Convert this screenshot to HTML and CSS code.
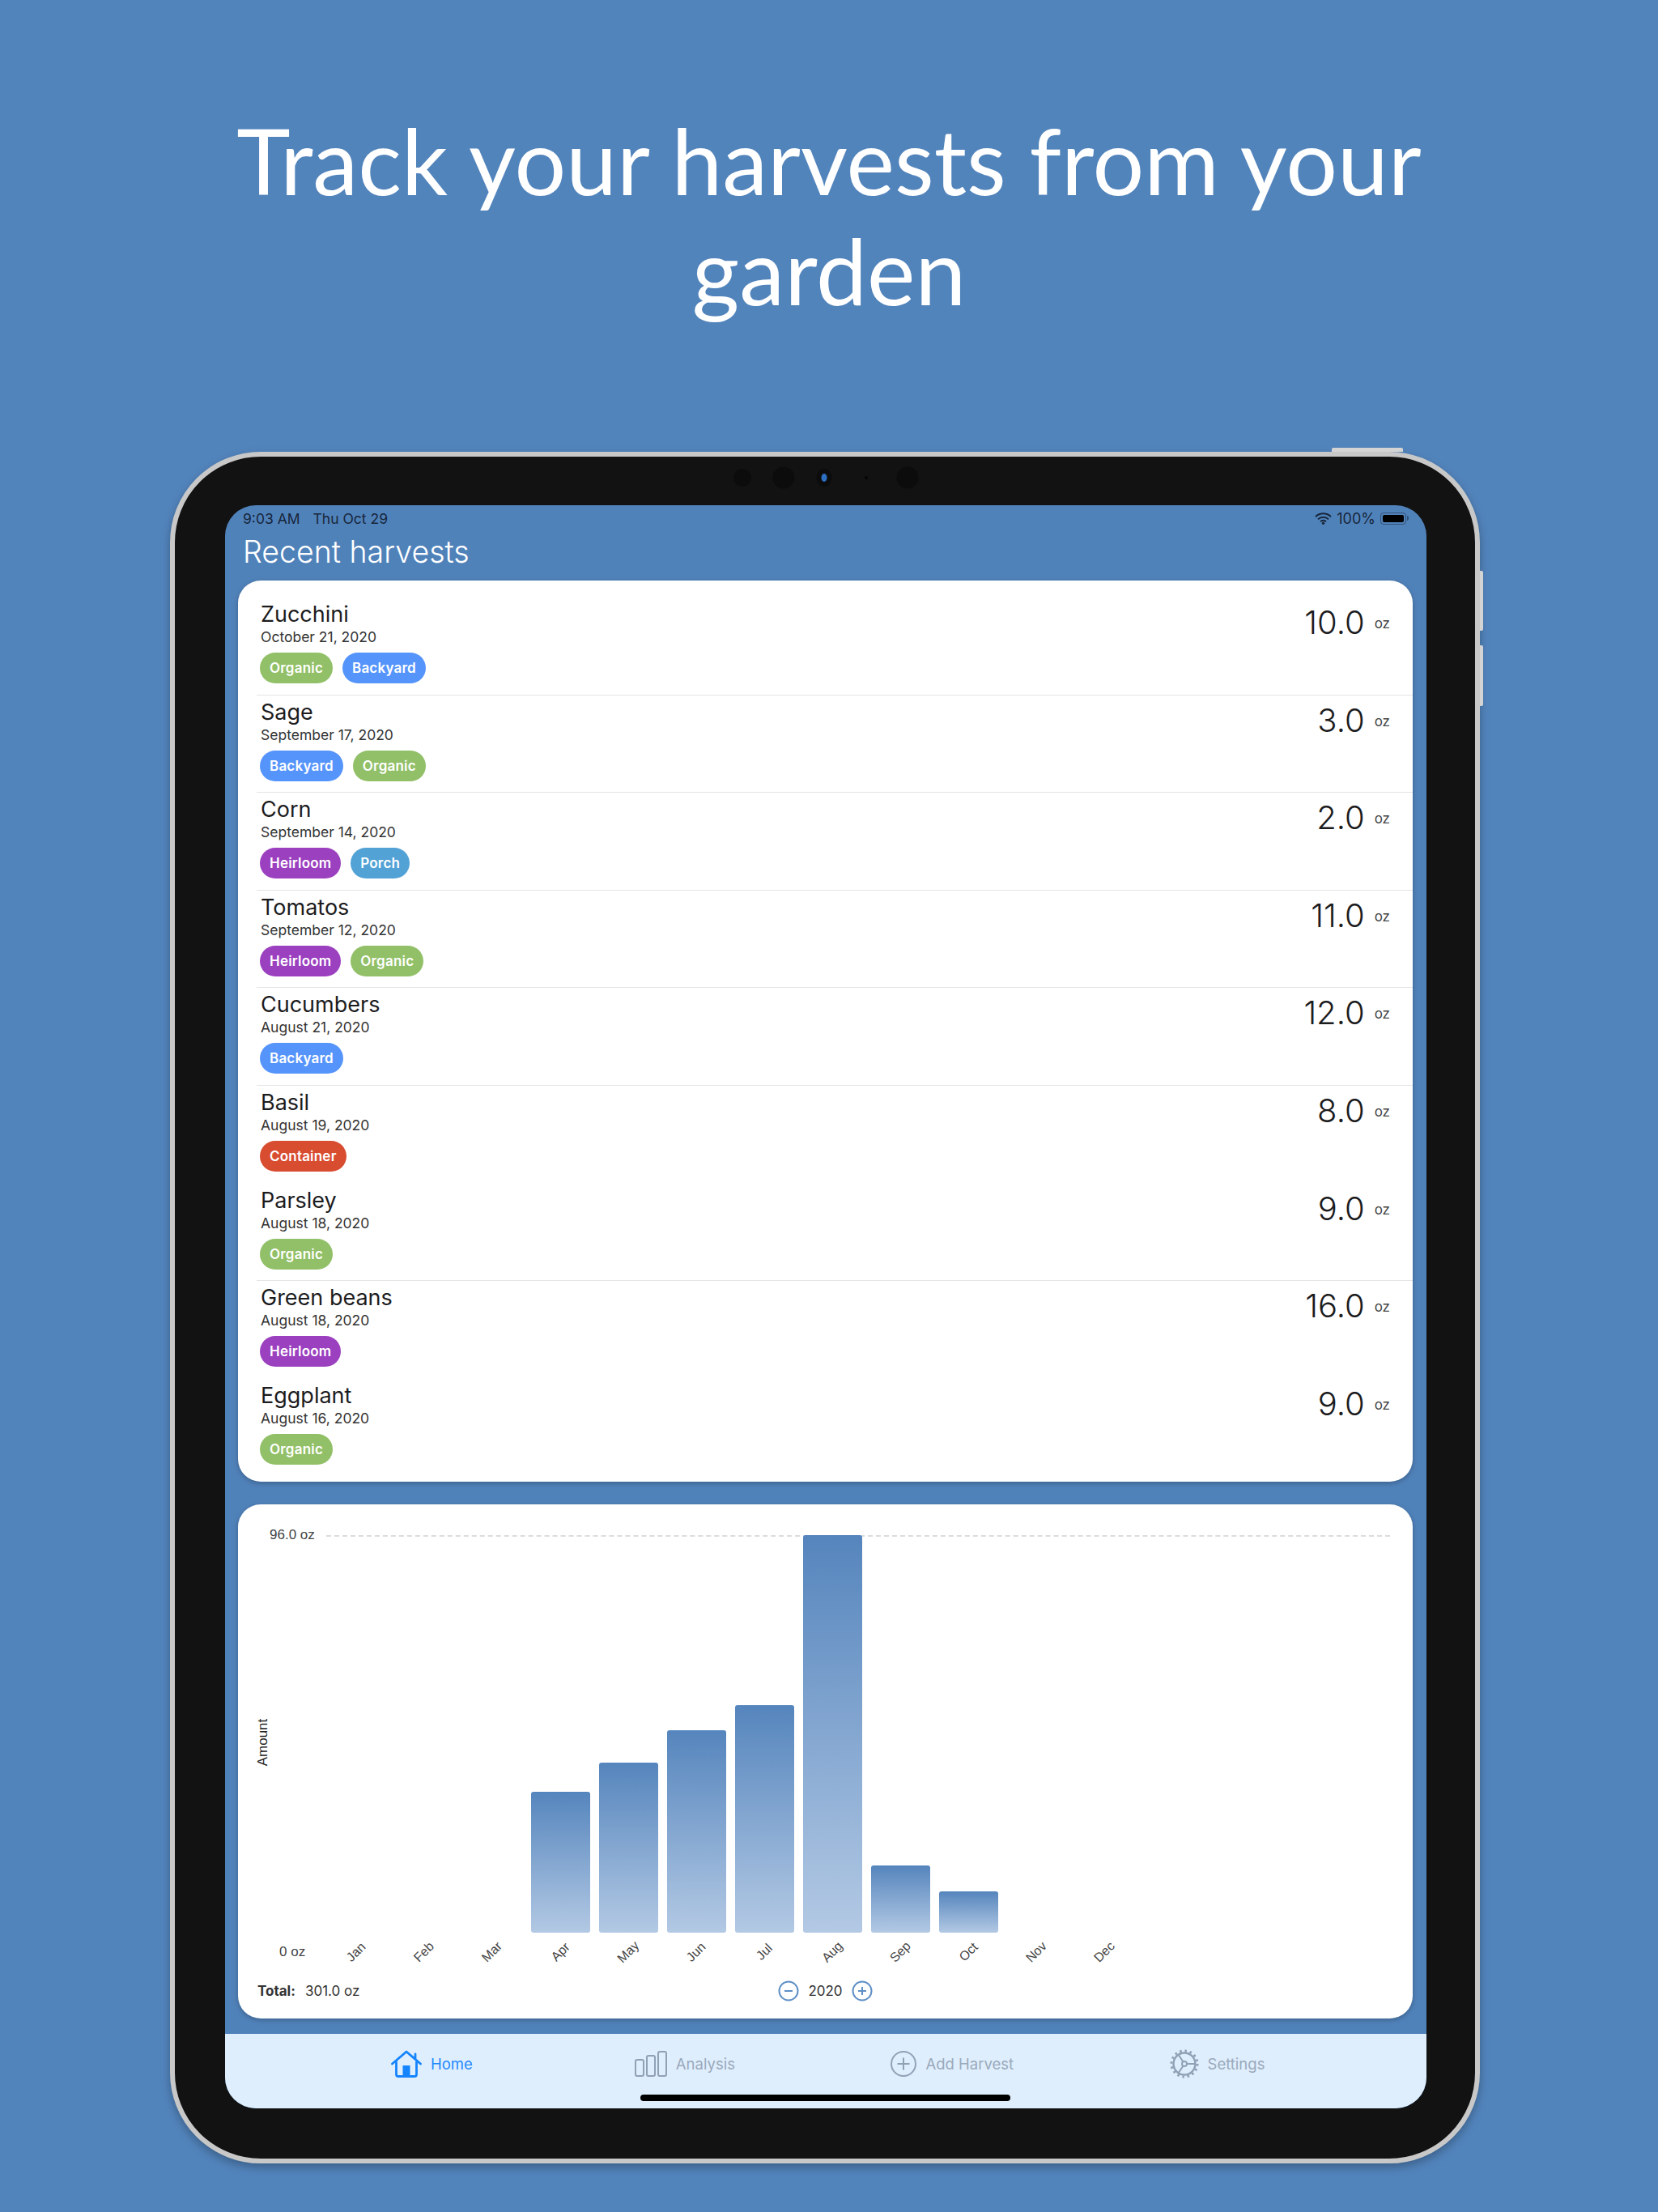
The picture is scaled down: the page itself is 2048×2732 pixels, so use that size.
FILE: index.html
```html
<!DOCTYPE html>
<html lang="en">
<head>
    <meta charset="UTF-8">
    <meta name="viewport" content="width=device-width, initial-scale=1.0">
    <title>Track your harvests</title>
    <link rel="stylesheet" href="styles.css">
</head>
<body>
    <h1 class="headline">Track your harvests from your<br>garden</h1>

    <div class="device">
        <span class="hw-btn hw-top"></span>
        <span class="hw-btn hw-vol-up"></span>
        <span class="hw-btn hw-vol-down"></span>

        <div class="sensors">
            <span class="sensor sensor-sm"></span>
            <span class="sensor sensor-lg"></span>
            <span class="sensor sensor-cam"></span>
            <span class="sensor sensor-dot"></span>
            <span class="sensor sensor-lg"></span>
        </div>

        <div class="screen">
            <div class="status-bar">
                <div class="status-left"><span>9:03 AM</span><span>Thu Oct 29</span></div>
                <div class="status-right">
                    <svg width="21" height="15" viewBox="0 0 21 15" class="wifi">
                        <path d="M1 5.2a13.5 13.5 0 0 1 19 0M4 8.4a9.2 9.2 0 0 1 13 0M7 11.2a4.8 4.8 0 0 1 7 0" fill="none" stroke="#17263a" stroke-width="2"/>
                        <circle cx="10.5" cy="13.2" r="1.7" fill="#17263a"/>
                    </svg>
                    <span>100%</span>
                    <span class="battery"><span class="battery-fill"></span></span>
                </div>
            </div>

            <h2 class="page-title">Recent harvests</h2>

            <div class="card harvest-list">
                <div class="row">
                    <div>
                        <div class="crop">Zucchini</div>
                        <div class="date">October 21, 2020</div>
                        <div class="tags"><span class="tag organic">Organic</span><span class="tag backyard">Backyard</span></div>
                    </div>
                    <div class="amount"><span class="value">10.0</span><span class="unit">oz</span></div>
                </div>
                <div class="row sep">
                    <div>
                        <div class="crop">Sage</div>
                        <div class="date">September 17, 2020</div>
                        <div class="tags"><span class="tag backyard">Backyard</span><span class="tag organic">Organic</span></div>
                    </div>
                    <div class="amount"><span class="value">3.0</span><span class="unit">oz</span></div>
                </div>
                <div class="row sep">
                    <div>
                        <div class="crop">Corn</div>
                        <div class="date">September 14, 2020</div>
                        <div class="tags"><span class="tag heirloom">Heirloom</span><span class="tag porch">Porch</span></div>
                    </div>
                    <div class="amount"><span class="value">2.0</span><span class="unit">oz</span></div>
                </div>
                <div class="row sep">
                    <div>
                        <div class="crop">Tomatos</div>
                        <div class="date">September 12, 2020</div>
                        <div class="tags"><span class="tag heirloom">Heirloom</span><span class="tag organic">Organic</span></div>
                    </div>
                    <div class="amount"><span class="value">11.0</span><span class="unit">oz</span></div>
                </div>
                <div class="row sep">
                    <div>
                        <div class="crop">Cucumbers</div>
                        <div class="date">August 21, 2020</div>
                        <div class="tags"><span class="tag backyard">Backyard</span></div>
                    </div>
                    <div class="amount"><span class="value">12.0</span><span class="unit">oz</span></div>
                </div>
                <div class="row sep">
                    <div>
                        <div class="crop">Basil</div>
                        <div class="date">August 19, 2020</div>
                        <div class="tags"><span class="tag container">Container</span></div>
                    </div>
                    <div class="amount"><span class="value">8.0</span><span class="unit">oz</span></div>
                </div>
                <div class="row">
                    <div>
                        <div class="crop">Parsley</div>
                        <div class="date">August 18, 2020</div>
                        <div class="tags"><span class="tag organic">Organic</span></div>
                    </div>
                    <div class="amount"><span class="value">9.0</span><span class="unit">oz</span></div>
                </div>
                <div class="row sep">
                    <div>
                        <div class="crop">Green beans</div>
                        <div class="date">August 18, 2020</div>
                        <div class="tags"><span class="tag heirloom">Heirloom</span></div>
                    </div>
                    <div class="amount"><span class="value">16.0</span><span class="unit">oz</span></div>
                </div>
                <div class="row">
                    <div>
                        <div class="crop">Eggplant</div>
                        <div class="date">August 16, 2020</div>
                        <div class="tags"><span class="tag organic">Organic</span></div>
                    </div>
                    <div class="amount"><span class="value">9.0</span><span class="unit">oz</span></div>
                </div>
            </div>

            <div class="card chart-card">
                <div class="plot">
                    <span class="max-label">96.0 oz</span>
                    <span class="max-line"></span>
                    <span class="axis-title">Amount</span>
                    <div class="bars">
                        <div class="slot"></div>
                        <div class="slot"></div>
                        <div class="slot"></div>
                        <div class="slot"><div class="bar" style="height:174px"></div></div>
                        <div class="slot"><div class="bar" style="height:210px"></div></div>
                        <div class="slot"><div class="bar" style="height:250px"></div></div>
                        <div class="slot"><div class="bar" style="height:281px"></div></div>
                        <div class="slot"><div class="bar" style="height:491px"></div></div>
                        <div class="slot"><div class="bar" style="height:83px"></div></div>
                        <div class="slot"><div class="bar" style="height:51px"></div></div>
                        <div class="slot"></div>
                        <div class="slot"></div>
                    </div>
                </div>
                <div class="months">
                    <span class="zero-label">0 oz</span>
                    <span class="month"><i>Jan</i></span>
                    <span class="month"><i>Feb</i></span>
                    <span class="month"><i>Mar</i></span>
                    <span class="month"><i>Apr</i></span>
                    <span class="month"><i>May</i></span>
                    <span class="month"><i>Jun</i></span>
                    <span class="month"><i>Jul</i></span>
                    <span class="month"><i>Aug</i></span>
                    <span class="month"><i>Sep</i></span>
                    <span class="month"><i>Oct</i></span>
                    <span class="month"><i>Nov</i></span>
                    <span class="month"><i>Dec</i></span>
                </div>
                <div class="chart-footer">
                    <div class="total"><b>Total:</b><span>301.0 oz</span></div>
                    <div class="stepper">
                        <svg width="26" height="26" viewBox="0 0 26 26"><circle cx="13" cy="13" r="11.5" fill="none" stroke="#5f8fc6" stroke-width="2"/><path d="M8 13h10" stroke="#5f8fc6" stroke-width="2"/></svg>
                        <span>2020</span>
                        <svg width="26" height="26" viewBox="0 0 26 26"><circle cx="13" cy="13" r="11.5" fill="none" stroke="#5f8fc6" stroke-width="2"/><path d="M8 13h10M13 8v10" stroke="#5f8fc6" stroke-width="2"/></svg>
                    </div>
                </div>
            </div>

            <div class="tab-bar">
                <div class="tab active">
                    <svg width="38" height="34" viewBox="0 0 38 34">
                        <path d="M1.5 17 19 2 36.500 17M30 11.500V5" fill="none" stroke="#1584ff" stroke-width="2.800" stroke-linecap="round" stroke-linejoin="round"/>
                        <path d="M6.500 14v16a2.500 2.500 0 0 0 2.500 2.500h20a2.500 2.500 0 0 0 2.500-2.500V14" fill="none" stroke="#1584ff" stroke-width="2.800"/>
                        <rect x="14.500" y="19" width="9" height="13" fill="#1584ff"/>
                    </svg>
                    <span>Home</span>
                </div>
                <div class="tab">
                    <svg width="40" height="32" viewBox="0 0 40 32" fill="none" stroke="#8fa1b5" stroke-width="2">
                        <rect x="1" y="11" width="10" height="20" rx="2"/>
                        <rect x="15" y="6" width="10" height="25" rx="2"/>
                        <rect x="29" y="1" width="10" height="30" rx="2"/>
                    </svg>
                    <span>Analysis</span>
                </div>
                <div class="tab">
                    <svg width="32" height="32" viewBox="0 0 32 32" fill="none" stroke="#8fa1b5" stroke-width="2">
                        <circle cx="16" cy="16" r="15"/>
                        <path d="M16 8.500v15M8.500 16h15"/>
                    </svg>
                    <span>Add Harvest</span>
                </div>
                <div class="tab">
                    <svg width="36" height="36" viewBox="0 0 36 36" fill="none" stroke="#8fa1b5">
                        <circle cx="18" cy="18" r="13.500" stroke-width="2.400"/>
                        <circle cx="18" cy="18" r="16" stroke-width="3" stroke-dasharray="2.500 3.780"/>
                        <path d="M21 18h11M16.500 15.500 10.500 6.500M16.500 20.500 10.500 29.500" stroke-width="2"/>
                        <circle cx="18" cy="18" r="3" stroke-width="2"/>
                    </svg>
                    <span>Settings</span>
                </div>
                <span class="home-indicator"></span>
            </div>
        </div>
    </div>
</body>
</html>
```
FILE: styles.css
```css
body {
    margin: 0;
    width: 2048px;
    height: 2732px;
    overflow: hidden;
    background-color: #5284bc;
    font-family: Inter, "Liberation Sans", sans-serif;
    color: #1c1c1e;
}

.headline {
    margin: 0;
    height: 558px;
    box-sizing: border-box;
    padding-top: 130px;
    text-align: center;
    font-family: Lato, sans-serif;
    font-size: 112.500px;
    font-weight: 400;
    line-height: 136px;
    color: #fff;
}

/* tablet frame */
.device {
    position: relative;
    margin-left: 210px;
    width: 1618px;
    height: 2114px;
    box-sizing: border-box;
    padding: 60px 60px 62px 62px;
    background-color: #121212;
    border: 6px solid #c8c8c8;
    border-radius: 112px;
    box-shadow: 0 5px 12px rgba(0, 0, 0, 0.28);
}

.hw-btn {
    position: absolute;
    background-color: #d4d4d4;
}

.hw-top {
    top: -11px;
    left: 1429px;
    width: 88px;
    height: 5px;
    border-radius: 2px 2px 0 0;
}

.hw-vol-up,
.hw-vol-down {
    right: -10px;
    width: 4px;
    border-radius: 0 2px 2px 0;
}

.hw-vol-up {
    top: 141px;
    height: 74px;
}

.hw-vol-down {
    top: 233px;
    height: 75px;
}

.sensors {
    position: absolute;
    top: 0;
    left: 0;
    right: 0;
    height: 52px;
}

.sensor {
    position: absolute;
    top: 50%;
    border-radius: 50%;
    background-color: #0c0c0c;
    transform: translate(-50%, -50%);
}

.sensor:nth-child(1) { left: 701px; }
.sensor:nth-child(2) { left: 752px; }
.sensor:nth-child(3) { left: 802px; }
.sensor:nth-child(4) { left: 854px; }
.sensor:nth-child(5) { left: 905px; }

.sensor-sm { width: 22px; height: 22px; }
.sensor-lg { width: 27px; height: 27px; }
.sensor-dot { width: 4px; height: 4px; background-color: #050505; }

.sensor-cam {
    width: 7px;
    height: 10px;
    background-color: #2c6fc0;
    box-shadow: 0 0 0 6px #0c0c0c;
}

.screen {
    position: relative;
    height: 100%;
    background-color: #5082ba;
    border-radius: 38px;
    overflow: hidden;
}

.status-bar {
    display: flex;
    justify-content: space-between;
    align-items: center;
    height: 32px;
    padding: 0 21px 0 22px;
    font-size: 17.500px;
    color: #17263a;
}

.status-left {
    display: flex;
    gap: 16px;
}

.status-right {
    display: flex;
    align-items: center;
    gap: 6px;
    font-size: 18px;
}

.battery {
    position: relative;
    display: block;
    margin-right: 4px;
    width: 32px;
    height: 15px;
    box-sizing: border-box;
    padding: 2px;
    border: 1px solid rgba(20, 35, 55, 0.5);
    border-radius: 4px;
}

.battery::after {
    content: "";
    position: absolute;
    top: 3px;
    right: -4px;
    width: 2px;
    height: 6px;
    border-radius: 0 2px 2px 0;
    background-color: rgba(20, 35, 55, 0.5);
}

.battery-fill {
    display: block;
    height: 100%;
    background-color: #000;
    border-radius: 2px;
}

.page-title {
    margin: 0;
    height: 61px;
    padding-left: 22px;
    font-size: 37.500px;
    font-weight: 300;
    line-height: 52px;
    color: #fff;
}

/* cards */
.card {
    margin: 0 17px 0 16px;
    background-color: #fff;
    border-radius: 28px;
    box-shadow: 0 2px 6px rgba(0, 0, 0, 0.25);
}

.harvest-list {
    height: 1113px;
    box-sizing: border-box;
    padding-top: 20px;
}

.row {
    display: flex;
    justify-content: space-between;
    align-items: flex-start;
    margin-left: 23px;
    padding-left: 4px;
    height: 120.600px;
    box-sizing: border-box;
}

.row.sep {
    box-shadow: inset 0 1px 0 #e4e4e4;
}

.crop {
    margin-top: 5px;
    padding-left: 1px;
    font-size: 27px;
    line-height: 34px;
}

.date {
    padding-left: 1px;
    font-size: 17.500px;
    line-height: 22px;
    color: #333;
}

.tags {
    display: flex;
    gap: 12px;
    margin-top: 8px;
}

.tag {
    padding: 0 12px;
    height: 38px;
    line-height: 38px;
    border-radius: 19px;
    font-size: 17px;
    font-weight: 600;
    letter-spacing: 0.2px;
    color: #fff;
}

.organic { background-color: #91c068; }
.backyard { background-color: #5594fb; }
.heirloom { background-color: #9b40bf; }
.porch { background-color: #52a2d6; }
.container { background-color: #d84c30; }

.amount {
    display: flex;
    align-items: center;
    gap: 12px;
    padding: 10px 28px 0 0;
}

.value {
    font-size: 40px;
    font-weight: 300;
    line-height: 44px;
}

.unit {
    font-size: 17px;
    color: #444;
    padding-top: 2px;
}

/* chart */
.chart-card {
    margin-top: 28px;
    height: 635px;
    padding-top: 38px;
    box-sizing: border-box;
    font-family: "Liberation Sans", Arial, sans-serif;
    font-size: 17px;
    color: #444;
}

.plot {
    position: relative;
    height: 491px;
}

.bars {
    position: relative;
    display: grid;
    grid-template-columns: repeat(12, 84px);
    margin-left: 104px;
    height: 100%;
}

.slot {
    display: flex;
    align-items: flex-end;
    justify-content: center;
}

.bar {
    width: 73px;
    border-radius: 3px;
    background: linear-gradient(to bottom, #5585bd, #b3c9e4);
}

.max-label {
    position: absolute;
    top: -10px;
    left: 39px;
}

.max-line {
    position: absolute;
    top: 0;
    left: 109px;
    right: 28px;
    border-top: 2px dashed #dcdcdc;
}

.axis-title {
    position: absolute;
    top: 256px;
    left: 31px;
    color: #222;
    transform: translate(-50%, -50%) rotate(-90deg);
}

.months {
    display: grid;
    grid-template-columns: 104px repeat(12, 84px);
    height: 48px;
    align-items: center;
}

.zero-label {
    padding-left: 51px;
}

.month {
    text-align: center;
}

.month i {
    display: inline-block;
    font-style: normal;
    font-size: 16px;
    transform: rotate(-45deg);
}

.chart-footer {
    display: grid;
    grid-template-columns: 1fr auto 1fr;
    align-items: center;
    margin-top: 11px;
    padding: 0 24px;
    font-family: Inter, sans-serif;
    font-size: 17px;
    color: #333;
}

.total {
    display: flex;
    gap: 12px;
}

.stepper {
    display: flex;
    align-items: center;
    gap: 11px;
}

/* bottom tabs */
.tab-bar {
    position: absolute;
    left: 0;
    right: 0;
    bottom: 0;
    height: 92px;
    display: flex;
    gap: 192.500px;
    padding: 20px 0 0 205px;
    box-sizing: border-box;
    background-color: #dfeefd;
    color: #9aa9ba;
    font-size: 18.500px;
}

.tab {
    display: flex;
    align-items: center;
    gap: 11px;
    height: 34px;
}

.tab.active {
    margin-right: 7.500px;
    color: #1f88ff;
}

.home-indicator {
    position: absolute;
    bottom: 9px;
    left: 513px;
    width: 457px;
    height: 8px;
    border-radius: 4px;
    background-color: #000;
}
```
